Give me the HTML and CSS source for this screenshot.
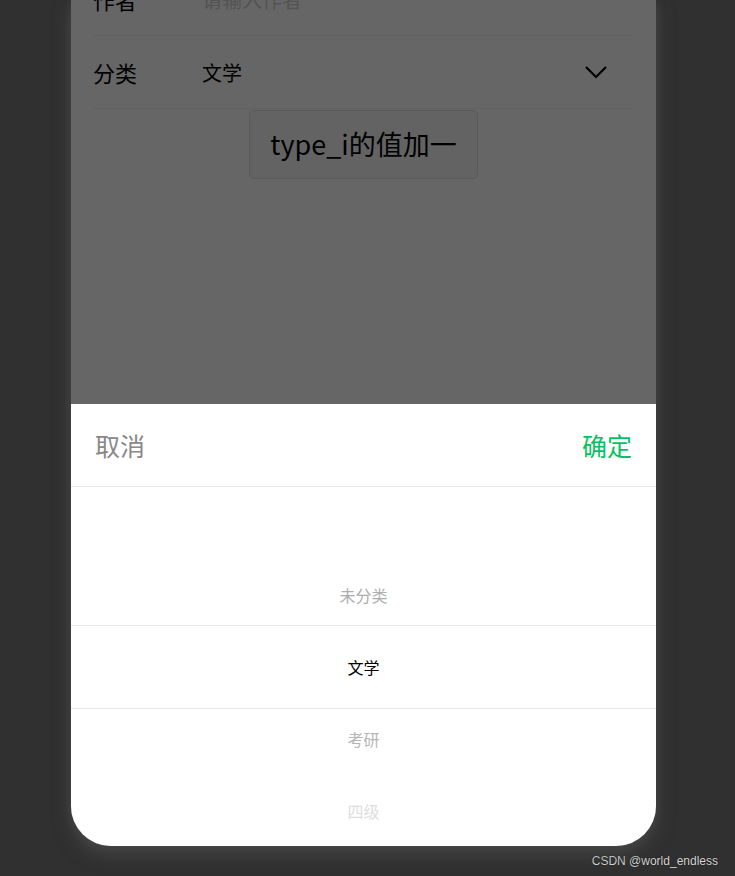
FILE: index.html
```html
<!DOCTYPE html>
<html lang="zh">
<head>
<meta charset="utf-8">
<title>picker</title>
<link rel="stylesheet" href="styles.css">
</head>
<body>
<div class="phone">
  <div class="form">
    <div class="row">
      <div class="label">作者</div>
      <div class="value placeholder">请输入作者</div>
    </div>
    <div class="row">
      <div class="label">分类</div>
      <div class="value">文学</div>
      <svg class="chevron" width="24" height="14" viewBox="0 0 24 14"><polyline points="2,2 12,12 22,2" fill="none" stroke="#000" stroke-width="2.2"/></svg>
    </div>
    <div class="btn-wrap">
      <div class="btn">type_i的值加一</div>
    </div>
  </div>
  <div class="mask"></div>
  <div class="sheet">
    <div class="sheet-head">
      <span class="cancel">取消</span>
      <span class="confirm">确定</span>
    </div>
    <div class="picker">
      <div class="indicator"></div>
      <div class="item"></div>
      <div class="item i-near">未分类</div>
      <div class="item i-sel">文学</div>
      <div class="item i-near2">考研</div>
      <div class="item i-far">四级</div>
    </div>
  </div>
</div>
<div class="footer">CSDN @world_endless</div>
</body>
</html>
```
FILE: styles.css
```css
html, body {
  margin: 0;
  padding: 0;
}
body {
  background: #303030;
  width: 735px;
  height: 876px;
  overflow: hidden;
  font-family: "Noto Sans CJK SC", "Noto Sans", sans-serif;
}
.phone {
  position: relative;
  width: 585px;
  height: 846px;
  margin-left: 71px;
  background: #fff;
  border-radius: 0 0 40px 40px;
  overflow: hidden;
  box-shadow: 0 0 8px rgba(70, 70, 70, 0.7), 0 8px 18px rgba(85, 85, 85, 0.6);
}
.form {
  margin-top: -37px;
}
.row {
  display: flex;
  align-items: center;
  height: 72px;
  margin: 0 22px;
  border-bottom: 1px solid #f3f3f3;
}
.label {
  width: 109px;
  font-size: 22px;
  color: #000;
}
.value {
  flex: 1;
  font-size: 20px;
  color: #000;
}
.placeholder {
  color: #d0d0d0;
}
.chevron {
  margin-right: 26px;
}
.btn-wrap {
  display: flex;
  justify-content: center;
  padding-top: 1px;
}
.btn {
  height: 67px;
  line-height: 66px;
  padding: 0 20px;
  font-size: 27px;
  color: #000;
  background: #f8f8f8;
  border: 1px solid #e2e2e2;
  border-radius: 5px;
}
.mask {
  position: absolute;
  inset: 0;
  background: rgba(0, 0, 0, 0.6);
}
.sheet {
  position: absolute;
  left: 0;
  right: 0;
  bottom: 0;
  height: 442px;
  background: #fff;
}
.sheet-head {
  display: flex;
  justify-content: space-between;
  align-items: center;
  height: 82px;
  padding: 0 24px;
  border-bottom: 1px solid #e8e8e8;
  font-size: 25px;
}
.cancel {
  color: #888;
}
.confirm {
  color: #07c160;
}
.picker {
  position: relative;
  height: 360px;
}
.indicator {
  position: absolute;
  left: 0;
  right: 0;
  top: 138px;
  height: 82px;
  border-top: 1px solid #e8e8e8;
  border-bottom: 1px solid #e8e8e8;
}
.item {
  height: 72px;
  display: flex;
  align-items: center;
  justify-content: center;
  font-size: 16px;
}
.i-near {
  color: #adadad;
}
.i-sel {
  color: #000;
}
.i-near2 {
  color: #b5b5b5;
}
.i-far {
  color: #dedede;
}
.footer {
  margin-top: 8px;
  padding-right: 17px;
  text-align: right;
  font-family: "Liberation Sans", Arial, sans-serif;
  font-size: 12px;
  color: #d8d8d8;
  text-shadow: 0 0 1px #000;
}
```
